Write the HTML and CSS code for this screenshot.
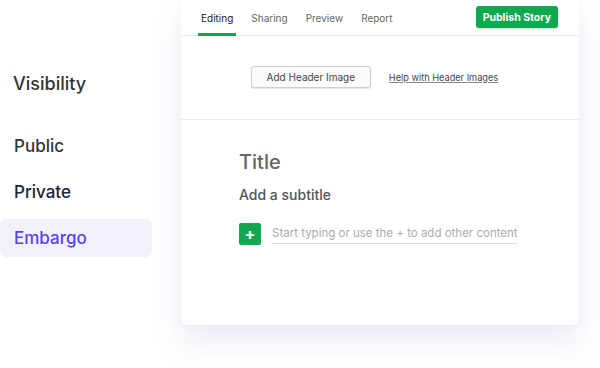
FILE: index.html
```html
<!DOCTYPE html>
<html lang="en">
<head>
  <meta charset="UTF-8">
  <meta name="viewport" content="width=device-width, initial-scale=1.0">
  <title>Story Editor</title>
  <link rel="stylesheet" href="styles.css">
</head>
<body>
  <div class="page">
    <!-- Visibility menu -->
    <aside class="sidebar">
      <h2 class="sidebar-title">Visibility</h2>
      <ul class="visibility-list">
        <li class="visibility-item">Public</li>
        <li class="visibility-item dark">Private</li>
        <li class="visibility-item active">Embargo</li>
      </ul>
    </aside>

    <!-- Editor card -->
    <main class="editor-card">
      <header class="card-header">
        <nav class="tabs">
          <span class="tab active">Editing</span>
          <span class="tab">Sharing</span>
          <span class="tab">Preview</span>
          <span class="tab">Report</span>
        </nav>
        <button class="publish-btn">Publish Story</button>
      </header>

      <section class="header-image">
        <button class="header-image-btn">Add Header Image</button>
        <a class="help-link" href="#">Help with Header Images</a>
      </section>

      <section class="story">
        <h1 class="story-title">Title</h1>
        <p class="story-subtitle">Add a subtitle</p>
        <div class="story-body">
          <button class="add-btn">+</button>
          <span class="placeholder">Start typing or use the + to add other content</span>
        </div>
      </section>
    </main>
  </div>
</body>
</html>
```

FILE: styles.css
```css
body {
  margin: 0;
  font-family: Inter, "Noto Sans", sans-serif;
  background-color: #ffffff;
  color: #333;
  width: 600px;
  height: 368px;
  overflow: hidden;
}
.page {
  display: flex;
  align-items: flex-start;
}
.sidebar {
  width: 181px;
  flex-shrink: 0;
  padding-top: 73px;
}
.sidebar-title {
  margin: 0 0 0 13px;
  font-size: 18px;
  font-weight: 500;
  line-height: 22px;
  color: #333;
}
.visibility-list {
  list-style: none;
  margin: 32px 0 0;
  padding: 0;
  display: flex;
  flex-direction: column;
  gap: 8px;
}
.visibility-item {
  width: 152px;
  box-sizing: border-box;
  padding: 0 14px;
  height: 38px;
  line-height: 38px;
  font-size: 17px;
  font-weight: 500;
  color: #333;
  border-radius: 6px;
}
.visibility-item.dark {
  color: #222236;
}
.visibility-item.active {
  background-color: #f2f1f9; /* pale lavender */
  color: #5540ff;
}
.editor-card {
  width: 398px;
  height: 325px;
  background: #fff;
  border-radius: 0 0 7px 7px;
  box-shadow: 0 18px 30px rgba(120, 120, 200, 0.14), 0 0 10px rgba(120, 120, 180, 0.06);
  display: flex;
  flex-direction: column;
}
.card-header {
  height: 35px;
  border-bottom: 1px solid #ececec;
  display: flex;
  align-items: stretch;
  justify-content: space-between;
  padding: 0 21px 0 17px;
}
.tabs {
  display: flex;
  gap: 12px;
}
.tab {
  display: flex;
  align-items: center;
  padding: 0 3px;
  font-size: 10px;
  color: #666;
  border-bottom: 3px solid transparent;
  box-sizing: border-box;
  height: 36px;
  padding-top: 2px;
}
.tab.active {
  color: #222;
  border-bottom-color: #0ea84f;
}
.publish-btn {
  align-self: flex-start;
  margin-top: 6px;
  height: 22px;
  padding: 0 7px;
  border: none;
  border-radius: 3px;
  background-color: #0ea84f; /* green */
  color: #fff;
  font-family: inherit;
  font-size: 10.5px;
  font-weight: 700;
  box-shadow: 0 1px 2px rgba(0, 0, 0, 0.15);
}
.header-image {
  height: 83px;
  border-bottom: 1px solid #ececec;
  display: flex;
  align-items: center;
  justify-content: center;
  gap: 18px;
  padding-right: 11px;
}
.header-image-btn {
  width: 120px;
  height: 22px;
  margin-top: -2px;
  background: #fafafa;
  border: 1px solid #cfcfcf;
  border-radius: 3px;
  box-shadow: 0 1px 1px rgba(0, 0, 0, 0.12);
  font-family: inherit;
  font-size: 10px;
  color: #444;
}
.help-link {
  font-size: 9.2px;
  color: #444;
  text-decoration: underline;
  text-decoration-color: #888;
}
.story {
  padding: 30px 0 0 58px;
}
.story-title {
  margin: 0;
  font-size: 20px;
  font-weight: 500;
  line-height: 24px;
  color: #666;
}
.story-subtitle {
  margin: 12px 0 0;
  font-size: 14px;
  font-weight: 500;
  line-height: 18px;
  color: #555;
}
.story-body {
  margin-top: 19px;
  display: flex;
  align-items: center;
  gap: 11px;
}
.add-btn {
  width: 22px;
  height: 22px;
  padding: 0;
  border: none;
  border-radius: 2px;
  background-color: #13a850;
  color: #fff;
  font-family: inherit;
  font-size: 16px;
  font-weight: 700;
  line-height: 22px;
}
.placeholder {
  width: 245px;
  padding-top: 2px;
  padding-bottom: 3px;
  border-bottom: 1px solid #ddd;
  font-size: 11.5px;
  color: #aaa;
  white-space: nowrap;
}
```
